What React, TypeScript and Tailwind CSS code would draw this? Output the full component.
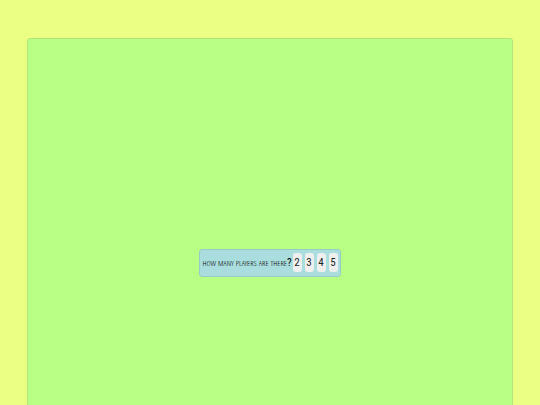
import { useState } from 'react';

const playerCounts = [2, 3, 4, 5];

export default function App() {
  const [players, setPlayers] = useState<number | null>(null);

  return (
    <div className="h-screen overflow-hidden bg-[#ebff85] pt-[38px] text-[11px] text-[#1c2628]">
      <main className="mx-auto flex h-[111vh] w-[90%] items-center justify-center rounded-[3px] border border-[#b5e67c] bg-[#baff85]">
        <div className="flex h-7 items-center gap-px rounded-[3px] border border-[#99cbc6] bg-[#aadddd] px-0.5 leading-4">
          <p
            id="question"
            className="whitespace-nowrap font-['Open_Sans_Condensed_Light','Open_Sans_Condensed','Liberation_Sans',sans-serif] font-light text-black [font-variant-caps:small-caps]"
          >
            how many players are there
            <span className="font-['Roboto_Condensed','Liberation_Sans',sans-serif] font-normal">?</span>
          </p>
          <div role="group" aria-labelledby="question" className="flex gap-[3px]">
            {playerCounts.map((n) => (
              <button
                key={n}
                type="button"
                aria-pressed={players === n}
                onClick={() => setPlayers(n)}
                className="flex h-[19px] w-[9px] items-center justify-center rounded-[3px] bg-[#efefef] font-['Roboto_Condensed','Liberation_Sans',sans-serif]"
              >
                {n}
              </button>
            ))}
          </div>
        </div>
      </main>
    </div>
  );
}
